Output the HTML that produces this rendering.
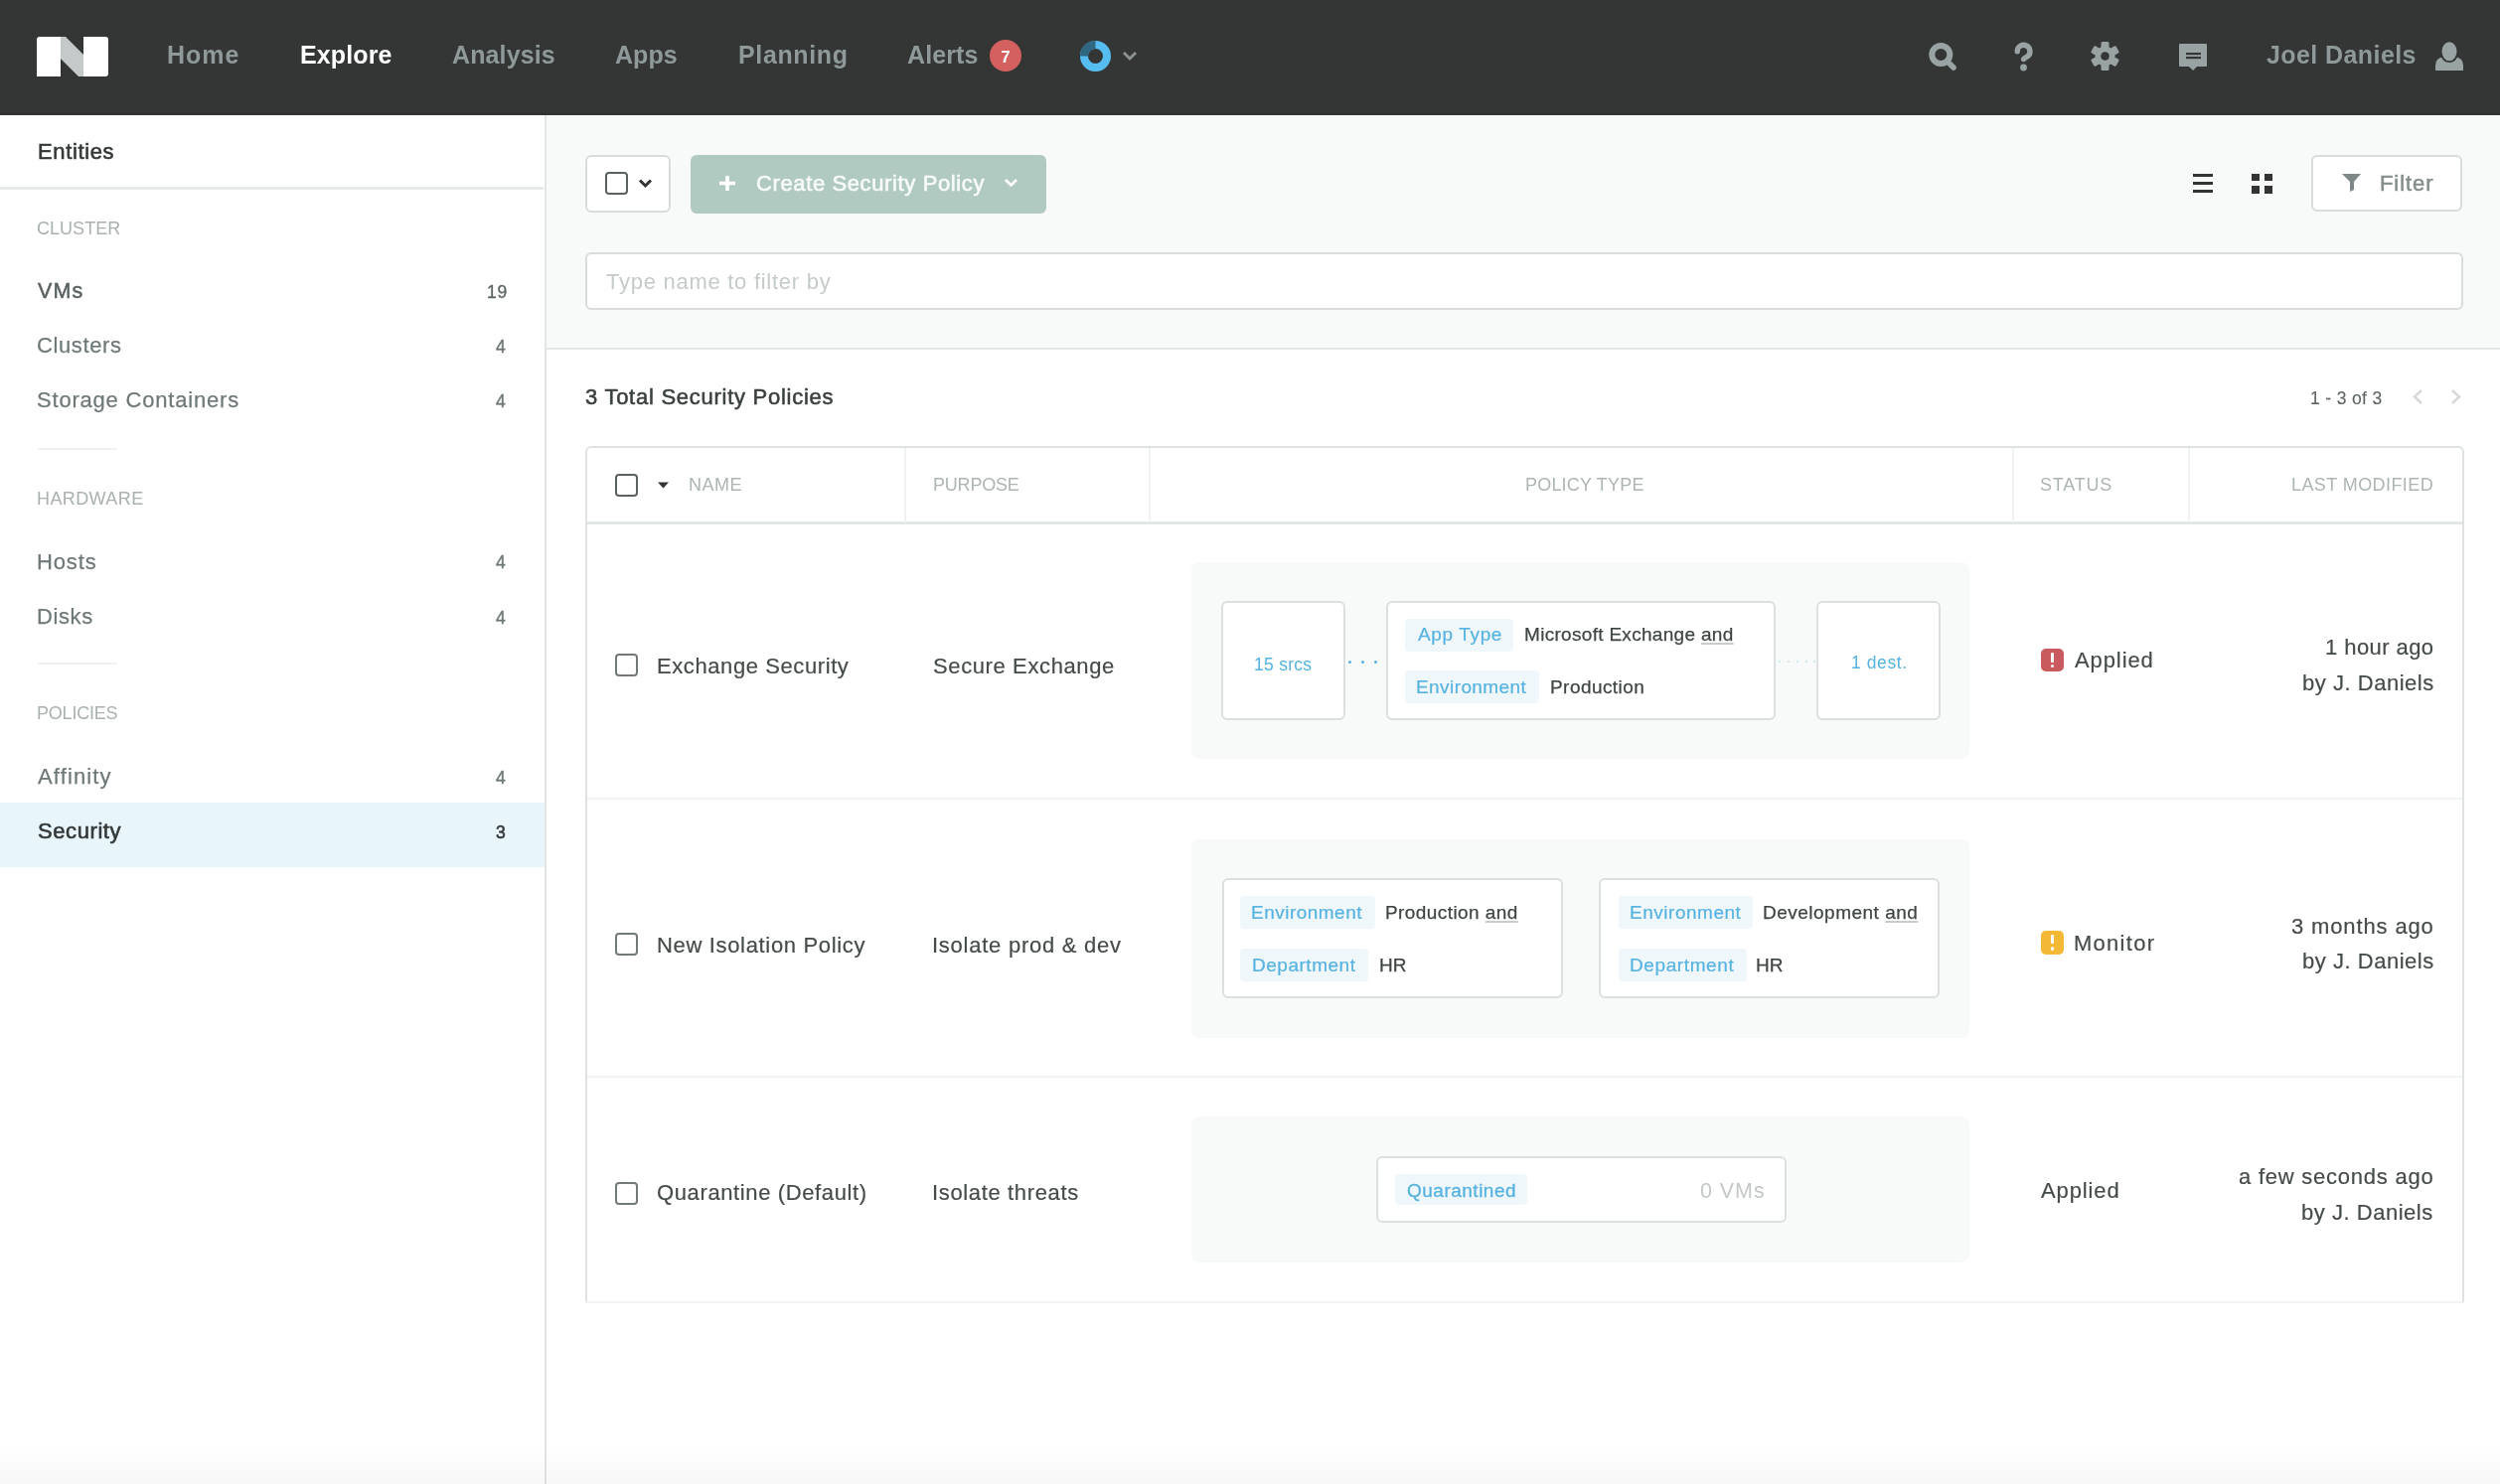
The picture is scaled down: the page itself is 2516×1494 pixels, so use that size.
<!DOCTYPE html>
<html><head><meta charset="utf-8"><title>Security Policies</title>
<style>
html,body{margin:0;padding:0;width:2516px;height:1494px;overflow:hidden;background:#fff;font-family:'Liberation Sans', sans-serif;}
body>div,body>svg{position:absolute;will-change:transform;}
</style></head><body>
<div style="position:absolute;left:0.00px;top:0.00px;width:2516.00px;height:116.00px;background:#343636;box-sizing:border-box;"></div>
<div style="position:absolute;left:0.00px;top:114.00px;width:2516.00px;height:1.00px;background:#2e3030;box-sizing:border-box;"></div>
<svg style="position:absolute;left:37px;top:37px" width="72" height="40" viewBox="0 0 72 40">
<path d="M3 0 H24 V40 H0 V3 Q0 0 3 0 Z" fill="#fff"/>
<path d="M47 0 H69 Q72 0 72 3 V37 Q72 40 69 40 H47 Z" fill="#fff"/>
<path d="M24 0 H29 L47 18 V40 H42 L24 22 Z" fill="#c4c9ca"/>
</svg>
<div style="position:absolute;left:168.00px;top:43.25px;font-size:25px;line-height:25px;color:#8f9999;font-weight:bold;white-space:nowrap;letter-spacing:1.000px;">Home</div>
<div style="position:absolute;left:302.00px;top:43.25px;font-size:25px;line-height:25px;color:#ffffff;font-weight:bold;white-space:nowrap;letter-spacing:0.117px;">Explore</div>
<div style="position:absolute;left:455.00px;top:43.25px;font-size:25px;line-height:25px;color:#8f9999;font-weight:bold;white-space:nowrap;letter-spacing:0.114px;">Analysis</div>
<div style="position:absolute;left:618.90px;top:43.25px;font-size:25px;line-height:25px;color:#8f9999;font-weight:bold;white-space:nowrap;letter-spacing:0.033px;">Apps</div>
<div style="position:absolute;left:742.60px;top:43.25px;font-size:25px;line-height:25px;color:#8f9999;font-weight:bold;white-space:nowrap;letter-spacing:0.629px;">Planning</div>
<div style="position:absolute;left:913.00px;top:43.25px;font-size:25px;line-height:25px;color:#8f9999;font-weight:bold;white-space:nowrap;letter-spacing:0.120px;">Alerts</div>
<div style="position:absolute;left:996px;top:40px;width:32px;height:32px;border-radius:50%;background:#d4615f;"></div>
<div style="position:absolute;left:1012.00px;top:48.55px;font-size:17px;line-height:17px;color:#fff;font-weight:bold;white-space:nowrap;width:0;text-align:center;display:flex;justify-content:center;">7</div>
<svg style="position:absolute;left:1086px;top:40px" width="33" height="33" viewBox="0 0 33 33">
<circle cx="16.5" cy="16.5" r="11.5" fill="none" stroke="#55bdf0" stroke-width="8"/>
<path d="M16.5 5 A11.5 11.5 0 0 0 5 16.5" fill="none" stroke="#2f6680" stroke-width="8"/>
</svg>
<svg style="position:absolute;left:1128px;top:49px" width="18" height="15" viewBox="0 0 18 15">
<path d="M3 4 L9 10 L15 4" fill="none" stroke="#8a9191" stroke-width="3"/>
</svg>
<svg style="position:absolute;left:1938px;top:40px" width="34" height="34" viewBox="0 0 34 34">
<circle cx="15.3" cy="15" r="9" fill="none" stroke="#9aa3a3" stroke-width="6"/>
<path d="M22 22 L28 28" stroke="#9aa3a3" stroke-width="5.5" stroke-linecap="round"/>
</svg>
<svg style="position:absolute;left:2024px;top:40px" width="26" height="34" viewBox="0 0 26 34">
<path d="M6.2 11.8 A6.4 6.4 0 1 1 16.4 16.9 Q12.6 18.8 12.6 19.6" fill="none" stroke="#9aa3a3" stroke-width="5.4" stroke-linecap="round"/>
<circle cx="12.5" cy="28" r="3.4" fill="#9aa3a3"/>
</svg>
<svg style="position:absolute;left:2104px;top:42px" width="29" height="29" viewBox="-14.5 -14.5 29 29">
<g fill="#9aa3a3">
<circle r="10"/>
<rect x="-4" y="-14.5" width="8" height="29" rx="1.5"/>
<rect x="-4" y="-14.5" width="8" height="29" rx="1.5" transform="rotate(60)"/>
<rect x="-4" y="-14.5" width="8" height="29" rx="1.5" transform="rotate(120)"/>
</g>
<circle r="4.3" fill="#343636"/>
</svg>
<svg style="position:absolute;left:2193px;top:44px" width="29" height="28" viewBox="0 0 29 28">
<path d="M0 1 Q0 0 1 0 H27 Q28 0 28 1 V22 Q28 23 27 23 H18 L14 27 L10 23 H1 Q0 23 0 22 Z" fill="#9aa3a3"/>
<rect x="7" y="9" width="15" height="2.2" fill="#343636"/>
<rect x="7" y="13" width="15" height="2.2" fill="#343636"/>
</svg>
<div style="position:absolute;left:2280.60px;top:43.25px;font-size:25px;line-height:25px;color:#8f9999;font-weight:bold;white-space:nowrap;letter-spacing:0.418px;">Joel Daniels</div>
<svg style="position:absolute;left:2451px;top:42px" width="29" height="29" viewBox="0 0 29 29">
<path d="M0 29 V24 Q0 16 8 15.5 H20 Q28 16 28 24 V29 Z" fill="#9aa3a3"/>
<ellipse cx="14" cy="10" rx="9.5" ry="11" fill="#343636"/>
<ellipse cx="14" cy="9.8" rx="7.5" ry="9.5" fill="#9aa3a3"/>
</svg>
<div style="position:absolute;left:0.00px;top:116.00px;width:548.00px;height:1378.00px;background:#ffffff;box-sizing:border-box;"></div>
<div style="position:absolute;left:547.50px;top:116.00px;width:2.00px;height:1378.00px;background:#e2e5e5;box-sizing:border-box;"></div>
<div style="position:absolute;left:37.60px;top:142.30px;font-size:22px;line-height:22px;color:#333737;font-weight:normal;white-space:nowrap;-webkit-text-stroke:0.6px #333737;letter-spacing:0.629px;">Entities</div>
<div style="position:absolute;left:0.00px;top:188.00px;width:547.00px;height:2.50px;background:#e6e9e9;box-sizing:border-box;"></div>
<div style="position:absolute;left:36.80px;top:220.70px;font-size:18px;line-height:18px;color:#a9b0b0;font-weight:normal;white-space:nowrap;letter-spacing:0.033px;">CLUSTER</div>
<div style="position:absolute;left:37.80px;top:282.73px;font-size:21.5px;line-height:21.5px;color:#596161;font-weight:normal;white-space:nowrap;-webkit-text-stroke:0.5px #596161;letter-spacing:1.100px;">VMs</div>
<div style="position:absolute;left:489.60px;top:286.12px;font-size:17.5px;line-height:17.5px;color:#5a6262;font-weight:normal;white-space:nowrap;-webkit-text-stroke:0.3px #5a6262;letter-spacing:0.700px;">19</div>
<div style="position:absolute;left:37.00px;top:337.30px;font-size:22px;line-height:22px;color:#6f7878;font-weight:normal;white-space:nowrap;-webkit-text-stroke:0.25px #6f7878;letter-spacing:0.614px;">Clusters</div>
<div style="position:absolute;left:499.30px;top:341.12px;font-size:17.5px;line-height:17.5px;color:#6f7878;font-weight:normal;white-space:nowrap;-webkit-text-stroke:0.45px #6f7878;">4</div>
<div style="position:absolute;left:36.80px;top:392.30px;font-size:22px;line-height:22px;color:#6f7878;font-weight:normal;white-space:nowrap;-webkit-text-stroke:0.25px #6f7878;letter-spacing:0.800px;">Storage Containers</div>
<div style="position:absolute;left:499.30px;top:396.12px;font-size:17.5px;line-height:17.5px;color:#6f7878;font-weight:normal;white-space:nowrap;-webkit-text-stroke:0.45px #6f7878;">4</div>
<div style="position:absolute;left:38.00px;top:450.50px;width:80.00px;height:2.00px;background:#f0f2f2;box-sizing:border-box;"></div>
<div style="position:absolute;left:37.00px;top:492.70px;font-size:18px;line-height:18px;color:#a9b0b0;font-weight:normal;white-space:nowrap;letter-spacing:0.400px;">HARDWARE</div>
<div style="position:absolute;left:37.00px;top:554.60px;font-size:22px;line-height:22px;color:#6f7878;font-weight:normal;white-space:nowrap;-webkit-text-stroke:0.25px #6f7878;letter-spacing:0.850px;">Hosts</div>
<div style="position:absolute;left:499.30px;top:558.42px;font-size:17.5px;line-height:17.5px;color:#6f7878;font-weight:normal;white-space:nowrap;-webkit-text-stroke:0.45px #6f7878;">4</div>
<div style="position:absolute;left:37.00px;top:609.70px;font-size:22px;line-height:22px;color:#6f7878;font-weight:normal;white-space:nowrap;-webkit-text-stroke:0.25px #6f7878;letter-spacing:0.600px;">Disks</div>
<div style="position:absolute;left:499.30px;top:613.52px;font-size:17.5px;line-height:17.5px;color:#6f7878;font-weight:normal;white-space:nowrap;-webkit-text-stroke:0.45px #6f7878;">4</div>
<div style="position:absolute;left:38.00px;top:666.50px;width:80.00px;height:2.00px;background:#f0f2f2;box-sizing:border-box;"></div>
<div style="position:absolute;left:37.00px;top:709.20px;font-size:18px;line-height:18px;color:#a9b0b0;font-weight:normal;white-space:nowrap;letter-spacing:-0.200px;">POLICIES</div>
<div style="position:absolute;left:38.00px;top:771.00px;font-size:22px;line-height:22px;color:#6f7878;font-weight:normal;white-space:nowrap;-webkit-text-stroke:0.25px #6f7878;letter-spacing:1.143px;">Affinity</div>
<div style="position:absolute;left:499.30px;top:774.83px;font-size:17.5px;line-height:17.5px;color:#6f7878;font-weight:normal;white-space:nowrap;-webkit-text-stroke:0.45px #6f7878;">4</div>
<div style="position:absolute;left:0.00px;top:807.50px;width:547.50px;height:64.50px;background:#e8f5fa;box-sizing:border-box;"></div>
<div style="position:absolute;left:38.00px;top:826.10px;font-size:22px;line-height:22px;color:#333737;font-weight:normal;white-space:nowrap;-webkit-text-stroke:0.6px #333737;letter-spacing:0.586px;">Security</div>
<div style="position:absolute;left:499.30px;top:829.92px;font-size:17.5px;line-height:17.5px;color:#333737;font-weight:normal;white-space:nowrap;-webkit-text-stroke:0.55px #333737;">3</div>
<div style="position:absolute;left:549.50px;top:116.00px;width:1966.50px;height:234.00px;background:#f8f9f9;box-sizing:border-box;"></div>
<div style="position:absolute;left:549.50px;top:349.50px;width:1966.50px;height:2.00px;background:#e3e6e6;box-sizing:border-box;"></div>
<div style="position:absolute;left:549.50px;top:351.50px;width:1966.50px;height:1142.50px;background:#ffffff;box-sizing:border-box;"></div>
<div style="position:absolute;left:589.00px;top:155.50px;width:85.50px;height:58.00px;background:#fff;box-sizing:border-box;border:2px solid #d9dcdc;border-radius:6px;"></div>
<div style="position:absolute;left:608.50px;top:173.00px;width:23.00px;height:23.00px;background:#fff;box-sizing:border-box;border:2px solid #5b6161;border-radius:4px;"></div>
<svg style="position:absolute;left:641px;top:178px" width="17" height="13" viewBox="0 0 17 13">
<path d="M3 3.5 L8.5 9 L14 3.5" fill="none" stroke="#333" stroke-width="3"/></svg>
<div style="position:absolute;left:695.00px;top:155.50px;width:358.00px;height:58.50px;background:#b1cac1;box-sizing:border-box;border-radius:6px;"></div>
<svg style="position:absolute;left:723px;top:176px" width="18" height="17" viewBox="0 0 18 17">
<rect x="7.2" y="1" width="3.6" height="15" fill="#fff"/><rect x="1" y="6.7" width="16" height="3.6" fill="#fff"/></svg>
<div style="position:absolute;left:761.00px;top:173.70px;font-size:22px;line-height:22px;color:#f7faf9;font-weight:normal;white-space:nowrap;-webkit-text-stroke:0.6px #f7faf9;letter-spacing:0.619px;">Create Security Policy</div>
<svg style="position:absolute;left:1009px;top:177px" width="17" height="13" viewBox="0 0 17 13">
<path d="M3 4 L8.5 9.5 L14 4" fill="none" stroke="#fff" stroke-width="2.6"/></svg>
<div style="position:absolute;left:2207.30px;top:175.00px;width:20.00px;height:3.30px;background:#333;box-sizing:border-box;"></div>
<div style="position:absolute;left:2207.30px;top:183.20px;width:20.00px;height:3.40px;background:#333;box-sizing:border-box;"></div>
<div style="position:absolute;left:2207.30px;top:191.20px;width:20.00px;height:3.30px;background:#333;box-sizing:border-box;"></div>
<div style="position:absolute;left:2266.40px;top:175.20px;width:7.50px;height:7.40px;background:#333;box-sizing:border-box;"></div>
<div style="position:absolute;left:2278.90px;top:175.20px;width:7.50px;height:7.40px;background:#333;box-sizing:border-box;"></div>
<div style="position:absolute;left:2266.40px;top:187.00px;width:7.50px;height:7.50px;background:#333;box-sizing:border-box;"></div>
<div style="position:absolute;left:2278.90px;top:187.00px;width:7.50px;height:7.50px;background:#333;box-sizing:border-box;"></div>
<div style="position:absolute;left:2326.30px;top:155.80px;width:152.20px;height:57.40px;background:#fff;box-sizing:border-box;border:2px solid #d9dcdc;border-radius:6px;"></div>
<svg style="position:absolute;left:2356px;top:174px" width="22" height="20" viewBox="0 0 22 20">
<path d="M1 1 H20 L13 9 V17 L9 19 V9 Z" fill="#7f8888"/></svg>
<div style="position:absolute;left:2395.00px;top:173.70px;font-size:22px;line-height:22px;color:#848c8c;font-weight:normal;white-space:nowrap;-webkit-text-stroke:0.5px #848c8c;letter-spacing:0.920px;">Filter</div>
<div style="position:absolute;left:589.00px;top:254.00px;width:1889.50px;height:57.50px;background:#fff;box-sizing:border-box;border:2px solid #d9dcdc;border-radius:6px;"></div>
<div style="position:absolute;left:609.70px;top:273.00px;font-size:22px;line-height:22px;color:#c5caca;font-weight:normal;white-space:nowrap;letter-spacing:0.729px;">Type name to filter by</div>
<div style="position:absolute;left:589.40px;top:388.70px;font-size:22px;line-height:22px;color:#3a3f3f;font-weight:normal;white-space:nowrap;-webkit-text-stroke:0.55px #3a3f3f;letter-spacing:0.733px;">3 Total Security Policies</div>
<div style="position:absolute;left:2324.80px;top:393.12px;font-size:17.5px;line-height:17.5px;color:#5c6262;font-weight:normal;white-space:nowrap;-webkit-text-stroke:0.1px #5c6262;letter-spacing:0.344px;">1 - 3 of 3</div>
<svg style="position:absolute;left:2425px;top:390px" width="56" height="19" viewBox="0 0 56 19">
<path d="M12 3 L5 9.5 L12 16" fill="none" stroke="#d5d8d8" stroke-width="2.5"/>
<path d="M43 3 L50 9.5 L43 16" fill="none" stroke="#d5d8d8" stroke-width="2.5"/></svg>
<div style="position:absolute;left:588.50px;top:448.50px;width:1890.50px;height:862.50px;background:#fff;box-sizing:border-box;border:2px solid #dfe2e2;border-radius:6px 6px 2px 2px;border-bottom-color:#f3f4f4;"></div>
<div style="position:absolute;left:590.50px;top:525.00px;width:1887.00px;height:2.50px;background:#e4e7e7;box-sizing:border-box;"></div>
<div style="position:absolute;left:910.00px;top:450.50px;width:1.50px;height:74.50px;background:#f0f2f2;box-sizing:border-box;"></div>
<div style="position:absolute;left:1156.00px;top:450.50px;width:1.50px;height:74.50px;background:#f0f2f2;box-sizing:border-box;"></div>
<div style="position:absolute;left:2024.50px;top:450.50px;width:1.50px;height:74.50px;background:#f0f2f2;box-sizing:border-box;"></div>
<div style="position:absolute;left:2201.50px;top:450.50px;width:1.50px;height:74.50px;background:#f0f2f2;box-sizing:border-box;"></div>
<div style="position:absolute;left:619.00px;top:476.50px;width:22.50px;height:23.00px;background:#fff;box-sizing:border-box;border:2px solid #5b6161;border-radius:4px;"></div>
<svg style="position:absolute;left:661px;top:484px" width="13" height="9" viewBox="0 0 13 9">
<path d="M1 1.5 H12 L6.5 7.5 Z" fill="#333"/></svg>
<div style="position:absolute;left:693.40px;top:478.70px;font-size:18px;line-height:18px;color:#adb4b4;font-weight:normal;white-space:nowrap;letter-spacing:0.500px;">NAME</div>
<div style="position:absolute;left:939.20px;top:478.70px;font-size:18px;line-height:18px;color:#adb4b4;font-weight:normal;white-space:nowrap;letter-spacing:-0.200px;">PURPOSE</div>
<div style="position:absolute;left:1535.00px;top:478.70px;font-size:18px;line-height:18px;color:#adb4b4;font-weight:normal;white-space:nowrap;letter-spacing:0.200px;">POLICY TYPE</div>
<div style="position:absolute;left:2053.00px;top:478.70px;font-size:18px;line-height:18px;color:#adb4b4;font-weight:normal;white-space:nowrap;letter-spacing:0.800px;">STATUS</div>
<div style="position:absolute;left:2306.00px;top:478.70px;font-size:18px;line-height:18px;color:#adb4b4;font-weight:normal;white-space:nowrap;letter-spacing:0.417px;">LAST MODIFIED</div>
<div style="position:absolute;left:590.50px;top:803.00px;width:1887.00px;height:2.00px;background:#f2f3f3;box-sizing:border-box;"></div>
<div style="position:absolute;left:590.50px;top:1083.00px;width:1887.00px;height:2.00px;background:#f2f3f3;box-sizing:border-box;"></div>
<div style="position:absolute;left:618.50px;top:657.50px;width:23.00px;height:23.00px;background:#fff;box-sizing:border-box;border:2px solid #737979;border-radius:4px;"></div>
<div style="position:absolute;left:661.00px;top:659.50px;font-size:22px;line-height:22px;color:#454a4a;font-weight:normal;white-space:nowrap;-webkit-text-stroke:0.2px #454a4a;letter-spacing:0.588px;">Exchange Security</div>
<div style="position:absolute;left:938.80px;top:659.50px;font-size:22px;line-height:22px;color:#454a4a;font-weight:normal;white-space:nowrap;-webkit-text-stroke:0.2px #454a4a;letter-spacing:0.614px;">Secure Exchange</div>
<div style="position:absolute;left:1199.40px;top:566.00px;width:782.60px;height:198.00px;background:#f8f9f9;box-sizing:border-box;border-radius:8px;"></div>
<div style="position:absolute;left:1229.30px;top:605.00px;width:125.00px;height:120.00px;background:#fff;box-sizing:border-box;border:2px solid #dcdfdf;border-radius:6px;"></div>
<div style="position:absolute;left:1261.60px;top:660.83px;font-size:17.5px;line-height:17.5px;color:#56b2df;font-weight:normal;white-space:nowrap;letter-spacing:0.283px;">15 srcs</div>
<div style="position:absolute;left:1356.50px;top:664.50px;width:3.00px;height:3.00px;background:#56b2df;box-sizing:border-box;border-radius:1.5px;"></div>
<div style="position:absolute;left:1369.50px;top:664.50px;width:3.00px;height:3.00px;background:#56b2df;box-sizing:border-box;border-radius:1.5px;"></div>
<div style="position:absolute;left:1382.50px;top:664.50px;width:3.00px;height:3.00px;background:#56b2df;box-sizing:border-box;border-radius:1.5px;"></div>
<div style="position:absolute;left:1394.80px;top:605.00px;width:392.20px;height:120.00px;background:#fff;box-sizing:border-box;border:2px solid #dcdfdf;border-radius:6px;"></div>
<div style="position:absolute;left:1414.00px;top:622.50px;width:108.80px;height:32.50px;background:#eff7fb;box-sizing:border-box;border-radius:4px;"></div>
<div style="position:absolute;left:1427.00px;top:629.05px;font-size:19px;line-height:19px;color:#56b2df;font-weight:normal;white-space:nowrap;-webkit-text-stroke:0.2px #56b2df;letter-spacing:0.643px;">App Type</div>
<div style="position:absolute;left:1533.80px;top:629.25px;font-size:19px;line-height:19px;color:#3f4444;font-weight:normal;white-space:nowrap;-webkit-text-stroke:0.25px #3f4444;letter-spacing:0.305px;">Microsoft Exchange <span style="text-decoration:underline;text-decoration-color:#c8cccc;text-decoration-thickness:1.5px;text-underline-offset:2px">and</span></div>
<div style="position:absolute;left:1414.00px;top:674.80px;width:135.40px;height:33.20px;background:#eff7fb;box-sizing:border-box;border-radius:4px;"></div>
<div style="position:absolute;left:1425.30px;top:682.05px;font-size:19px;line-height:19px;color:#56b2df;font-weight:normal;white-space:nowrap;-webkit-text-stroke:0.2px #56b2df;letter-spacing:0.420px;">Environment</div>
<div style="position:absolute;left:1559.80px;top:682.05px;font-size:19px;line-height:19px;color:#3f4444;font-weight:normal;white-space:nowrap;-webkit-text-stroke:0.25px #3f4444;letter-spacing:0.444px;">Production</div>
<div style="position:absolute;left:1789.80px;top:665.00px;width:2.40px;height:2.40px;background:#c2e2f1;box-sizing:border-box;border-radius:1px;"></div>
<div style="position:absolute;left:1798.80px;top:665.00px;width:2.40px;height:2.40px;background:#c2e2f1;box-sizing:border-box;border-radius:1px;"></div>
<div style="position:absolute;left:1807.80px;top:665.00px;width:2.40px;height:2.40px;background:#c2e2f1;box-sizing:border-box;border-radius:1px;"></div>
<div style="position:absolute;left:1816.80px;top:665.00px;width:2.40px;height:2.40px;background:#c2e2f1;box-sizing:border-box;border-radius:1px;"></div>
<div style="position:absolute;left:1824.80px;top:665.00px;width:2.40px;height:2.40px;background:#c2e2f1;box-sizing:border-box;border-radius:1px;"></div>
<div style="position:absolute;left:1828.00px;top:605.00px;width:124.80px;height:120.00px;background:#fff;box-sizing:border-box;border:2px solid #dcdfdf;border-radius:6px;"></div>
<div style="position:absolute;left:1862.70px;top:658.92px;font-size:17.5px;line-height:17.5px;color:#56b2df;font-weight:normal;white-space:nowrap;letter-spacing:0.583px;">1 dest.</div>
<div style="position:absolute;left:2054.00px;top:653.40px;width:23.00px;height:23.30px;background:#c95a5d;box-sizing:border-box;border-radius:5px;"></div>
<div style="position:absolute;left:2064.10px;top:657.00px;width:3.10px;height:9.50px;background:#fff;box-sizing:border-box;border-radius:1px;"></div>
<div style="position:absolute;left:2064.10px;top:669.20px;width:3.10px;height:3.40px;background:#fff;box-sizing:border-box;border-radius:1.5px;"></div>
<div style="position:absolute;left:2087.60px;top:654.10px;font-size:22px;line-height:22px;color:#454a4a;font-weight:normal;white-space:nowrap;-webkit-text-stroke:0.2px #454a4a;letter-spacing:0.900px;">Applied</div>
<div style="position:absolute;left:2340.00px;top:641.20px;font-size:22px;line-height:22px;color:#454a4a;font-weight:normal;white-space:nowrap;-webkit-text-stroke:0.2px #454a4a;letter-spacing:0.433px;">1 hour ago</div>
<div style="position:absolute;left:2316.60px;top:677.00px;font-size:22px;line-height:22px;color:#454a4a;font-weight:normal;white-space:nowrap;-webkit-text-stroke:0.2px #454a4a;letter-spacing:0.525px;">by J. Daniels</div>
<div style="position:absolute;left:618.50px;top:939.00px;width:23.00px;height:23.00px;background:#fff;box-sizing:border-box;border:2px solid #737979;border-radius:4px;"></div>
<div style="position:absolute;left:661.00px;top:940.60px;font-size:22px;line-height:22px;color:#454a4a;font-weight:normal;white-space:nowrap;-webkit-text-stroke:0.2px #454a4a;letter-spacing:0.663px;">New Isolation Policy</div>
<div style="position:absolute;left:937.80px;top:940.60px;font-size:22px;line-height:22px;color:#454a4a;font-weight:normal;white-space:nowrap;-webkit-text-stroke:0.2px #454a4a;letter-spacing:0.747px;">Isolate prod &amp; dev</div>
<div style="position:absolute;left:1199.40px;top:844.60px;width:782.60px;height:199.90px;background:#f8f9f9;box-sizing:border-box;border-radius:8px;"></div>
<div style="position:absolute;left:1229.60px;top:884.40px;width:343.10px;height:120.60px;background:#fff;box-sizing:border-box;border:2px solid #dcdfdf;border-radius:6px;"></div>
<div style="position:absolute;left:1248.00px;top:902.00px;width:135.50px;height:33.30px;background:#eff7fb;box-sizing:border-box;border-radius:4px;"></div>
<div style="position:absolute;left:1259.40px;top:909.05px;font-size:19px;line-height:19px;color:#56b2df;font-weight:normal;white-space:nowrap;-webkit-text-stroke:0.2px #56b2df;letter-spacing:0.480px;">Environment</div>
<div style="position:absolute;left:1393.50px;top:909.05px;font-size:19px;line-height:19px;color:#3f4444;font-weight:normal;white-space:nowrap;-webkit-text-stroke:0.25px #3f4444;letter-spacing:0.423px;">Production <span style="text-decoration:underline;text-decoration-color:#c8cccc;text-decoration-thickness:1.5px;text-underline-offset:2px">and</span></div>
<div style="position:absolute;left:1248.00px;top:954.80px;width:129.00px;height:33.20px;background:#eff7fb;box-sizing:border-box;border-radius:4px;"></div>
<div style="position:absolute;left:1260.00px;top:962.15px;font-size:19px;line-height:19px;color:#56b2df;font-weight:normal;white-space:nowrap;-webkit-text-stroke:0.2px #56b2df;letter-spacing:0.522px;">Department</div>
<div style="position:absolute;left:1388.00px;top:962.15px;font-size:19px;line-height:19px;color:#3f4444;font-weight:normal;white-space:nowrap;-webkit-text-stroke:0.25px #3f4444;">HR</div>
<div style="position:absolute;left:1609.40px;top:884.40px;width:343.40px;height:120.60px;background:#fff;box-sizing:border-box;border:2px solid #dcdfdf;border-radius:6px;"></div>
<div style="position:absolute;left:1628.80px;top:902.00px;width:134.50px;height:33.30px;background:#eff7fb;box-sizing:border-box;border-radius:4px;"></div>
<div style="position:absolute;left:1639.80px;top:909.05px;font-size:19px;line-height:19px;color:#56b2df;font-weight:normal;white-space:nowrap;-webkit-text-stroke:0.2px #56b2df;letter-spacing:0.520px;">Environment</div>
<div style="position:absolute;left:1773.60px;top:909.05px;font-size:19px;line-height:19px;color:#3f4444;font-weight:normal;white-space:nowrap;-webkit-text-stroke:0.25px #3f4444;letter-spacing:0.493px;">Development <span style="text-decoration:underline;text-decoration-color:#c8cccc;text-decoration-thickness:1.5px;text-underline-offset:2px">and</span></div>
<div style="position:absolute;left:1628.80px;top:954.80px;width:128.60px;height:33.20px;background:#eff7fb;box-sizing:border-box;border-radius:4px;"></div>
<div style="position:absolute;left:1640.00px;top:962.15px;font-size:19px;line-height:19px;color:#56b2df;font-weight:normal;white-space:nowrap;-webkit-text-stroke:0.2px #56b2df;letter-spacing:0.600px;">Department</div>
<div style="position:absolute;left:1767.00px;top:962.15px;font-size:19px;line-height:19px;color:#3f4444;font-weight:normal;white-space:nowrap;-webkit-text-stroke:0.25px #3f4444;">HR</div>
<div style="position:absolute;left:2054.00px;top:937.00px;width:23.00px;height:23.70px;background:#f3b835;box-sizing:border-box;border-radius:5px;"></div>
<div style="position:absolute;left:2064.10px;top:940.60px;width:3.10px;height:9.40px;background:#fff;box-sizing:border-box;border-radius:1px;"></div>
<div style="position:absolute;left:2064.10px;top:952.80px;width:3.10px;height:3.50px;background:#fff;box-sizing:border-box;border-radius:1.5px;"></div>
<div style="position:absolute;left:2086.60px;top:938.50px;font-size:22px;line-height:22px;color:#454a4a;font-weight:normal;white-space:nowrap;-webkit-text-stroke:0.2px #454a4a;letter-spacing:1.267px;">Monitor</div>
<div style="position:absolute;left:2306.40px;top:922.30px;font-size:22px;line-height:22px;color:#454a4a;font-weight:normal;white-space:nowrap;-webkit-text-stroke:0.2px #454a4a;letter-spacing:0.864px;">3 months ago</div>
<div style="position:absolute;left:2316.60px;top:957.30px;font-size:22px;line-height:22px;color:#454a4a;font-weight:normal;white-space:nowrap;-webkit-text-stroke:0.2px #454a4a;letter-spacing:0.525px;">by J. Daniels</div>
<div style="position:absolute;left:618.50px;top:1189.50px;width:23.00px;height:23.00px;background:#fff;box-sizing:border-box;border:2px solid #737979;border-radius:4px;"></div>
<div style="position:absolute;left:661.20px;top:1190.10px;font-size:22px;line-height:22px;color:#454a4a;font-weight:normal;white-space:nowrap;-webkit-text-stroke:0.2px #454a4a;letter-spacing:0.621px;">Quarantine (Default)</div>
<div style="position:absolute;left:938.00px;top:1190.10px;font-size:22px;line-height:22px;color:#454a4a;font-weight:normal;white-space:nowrap;-webkit-text-stroke:0.2px #454a4a;letter-spacing:0.643px;">Isolate threats</div>
<div style="position:absolute;left:1199.40px;top:1124.30px;width:782.60px;height:146.70px;background:#f8f9f9;box-sizing:border-box;border-radius:8px;"></div>
<div style="position:absolute;left:1384.80px;top:1164.20px;width:412.50px;height:67.00px;background:#fff;box-sizing:border-box;border:2px solid #dcdfdf;border-radius:6px;"></div>
<div style="position:absolute;left:1404.20px;top:1182.00px;width:133.20px;height:31.40px;background:#eff7fb;box-sizing:border-box;border-radius:4px;"></div>
<div style="position:absolute;left:1416.00px;top:1189.15px;font-size:19px;line-height:19px;color:#56b2df;font-weight:normal;white-space:nowrap;-webkit-text-stroke:0.3px #56b2df;letter-spacing:0.500px;">Quarantined</div>
<div style="position:absolute;left:1711.40px;top:1188.72px;font-size:21.5px;line-height:21.5px;color:#c3c7c7;font-weight:normal;white-space:nowrap;letter-spacing:0.950px;">0 VMs</div>
<div style="position:absolute;left:2054.40px;top:1187.50px;font-size:22px;line-height:22px;color:#454a4a;font-weight:normal;white-space:nowrap;-webkit-text-stroke:0.2px #454a4a;letter-spacing:0.883px;">Applied</div>
<div style="position:absolute;left:2253.30px;top:1174.20px;font-size:22px;line-height:22px;color:#454a4a;font-weight:normal;white-space:nowrap;-webkit-text-stroke:0.2px #454a4a;letter-spacing:0.769px;">a few seconds ago</div>
<div style="position:absolute;left:2316.30px;top:1210.00px;font-size:22px;line-height:22px;color:#454a4a;font-weight:normal;white-space:nowrap;-webkit-text-stroke:0.2px #454a4a;letter-spacing:0.525px;">by J. Daniels</div>
<div style="position:absolute;left:0.00px;top:1452.00px;width:2516.00px;height:42.00px;background:linear-gradient(rgba(0,0,0,0), rgba(0,0,0,0.028));box-sizing:border-box;"></div>
</body></html>
